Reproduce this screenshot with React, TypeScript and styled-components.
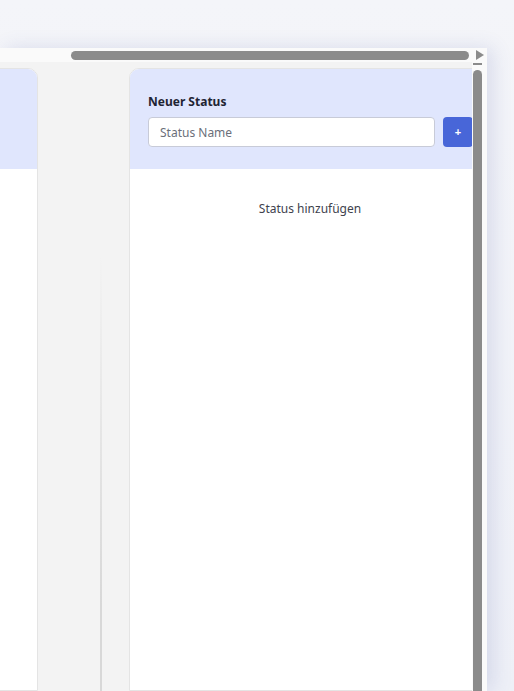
import React from "react";
import styled, { createGlobalStyle } from "styled-components";

const Global = createGlobalStyle`
  html, body { margin: 0; padding: 0; }
  body { background: linear-gradient(180deg, #f4f5f9 0%, #eef0f7 100%); font-family: "Noto Sans", "Open Sans", sans-serif; height: 691px; overflow: hidden; }
`;

const Page = styled.div`
  padding-top: 48px;
`;
const Win = styled.div`
  width: 487px;
  height: 643px;
  display: flex;
  flex-direction: column;
  background: #fafafa;
  box-shadow: 6px 0 18px rgba(70, 80, 160, 0.15);
`;
const HBar = styled.div`
  height: 14px;
  display: flex;
  align-items: center;
  background: #fafafa;
`;
const HThumb = styled.div`
  margin-left: 71px;
  width: 398px;
  height: 9px;
  border-radius: 5px;
  background: #8b8b8b;
`;
const Arrow = styled.div`
  margin-left: 7px;
  width: 0; height: 0;
  border-top: 5px solid transparent;
  border-bottom: 5px solid transparent;
  border-left: 8px solid #8b8b8b;
`;
const Body = styled.div`
  flex: 1;
  display: flex;
  min-height: 0;
`;
const Content = styled.div`
  width: 472px;
  background: #f3f3f3;
  display: flex;
  padding-top: 6px;
  overflow: hidden;
  position: relative;
`;
const VBar = styled.div`
  width: 15px;
  background: #fafafa;
  display: flex;
  flex-direction: column;
  align-items: center;
  padding-top: 1px;
`;
const VDash = styled.div`
  width: 9px; height: 2px; background: #8b8b8b; margin-left: -4px;
`;
const VThumb = styled.div`
  margin-top: 5px; margin-left: -4px;
  width: 9px; flex: 1; border-radius: 5px 5px 0 0; background: #8b8b8b;
`;
const Card = styled.div<{ $w: number; $ml: number }>`
  flex: none;
  width: ${p => p.$w}px;
  margin-left: ${p => p.$ml}px;
  border-radius: 10px 10px 0 0;
  background: #fff;
  border: 1px solid #e4e4e4;
  display: flex;
  flex-direction: column;
  overflow: hidden;
`;
const Head = styled.div`
  height: 100px;
  background: #e0e6fd;
  padding: 24px 0 0 18px;
  box-sizing: border-box;
`;
const Title = styled.div`
  font-size: 12px;
  font-weight: 700;
  color: #1f2433;
  margin-bottom: 7px;
`;
const Row = styled.div`
  display: flex;
  gap: 8px;
`;
const Input = styled.input`
  width: 287px;
  height: 30px;
  box-sizing: border-box;
  border: 1px solid #c8cbd8;
  border-radius: 4px;
  padding: 0 11px;
  font-family: inherit;
  font-size: 12px;
  &::placeholder { color: #6b6f7a; }
`;
const Btn = styled.button`
  width: 30px; height: 30px;
  border: none; border-radius: 4px;
  background: #4866d8; color: #fff;
  font-size: 11px; font-weight: 700;
  padding: 0;
`;
const Empty = styled.div`
  text-align: center;
  font-size: 12px;
  color: #3e424d;
  margin-top: 31px;
`;
const Divider = styled.div`
  position: absolute;
  left: 100px; top: 194px; bottom: 0;
  width: 2px;
  background: linear-gradient(180deg, #f3f3f3, #d8d8d8 80%);
`;

export default function App() {
  return (
    <>
      <Global />
      <Page>
        <Win>
          <HBar><HThumb /><Arrow /></HBar>
          <Body>
            <Content>
              <Card $w={80} $ml={-44}><Head /></Card>
              <Divider />
              <Card $w={360} $ml={91}>
                <Head>
                  <Title>Neuer Status</Title>
                  <Row>
                    <Input placeholder="Status Name" />
                    <Btn>+</Btn>
                  </Row>
                </Head>
                <Empty>Status hinzufügen</Empty>
              </Card>
            </Content>
            <VBar><VDash /><VThumb /></VBar>
          </Body>
        </Win>
      </Page>
    </>
  );
}
